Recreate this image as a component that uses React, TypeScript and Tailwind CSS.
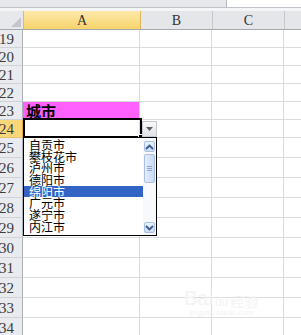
import React from "react";

const rows = [19, 20, 21, 22, 23, 24, 25, 26, 27, 28, 29, 30, 31, 32, 33, 34];
const cities = ["自贡市", "攀枝花市", "泸州市", "德阳市", "绵阳市", "广元市", "遂宁市", "内江市"];

const Row = ({ n }: { n: number }) => {
  const tall = n >= 25;
  const active = n === 24;
  return (
    <div className={`flex shrink-0 ${tall ? "h-[20px]" : "h-[18px]"}`}>
      <div
        className={`w-[24px] shrink-0 flex items-center -ml-[1px] border-r border-b ${
          active ? "bg-[#f9d77a] border-r-[#e0a84a] border-b-[#e8c06a]" : "bg-[#e9ebef] border-r-[#a9b0b9] border-b-[#cfd3d9]"
        }`}
      >
        <span className="text-[15px] leading-none text-[#3b3b3b] pt-[2px]" style={{ fontFamily: '"Liberation Serif", serif' }}>
          {n}
        </span>
      </div>
      <div
        className={`w-[117px] shrink-0 border-r border-b border-[#dadcdd] flex items-end ${n === 23 ? "bg-[#ff61ff]" : "bg-white"}`}
      >
        {n === 23 && (
          <span
            className="pl-[3px] text-[15px] leading-[17px] font-bold text-black"
            style={{ fontFamily: '"Noto Sans CJK SC", sans-serif' }}
          >
            城市
          </span>
        )}
      </div>
      <div className="w-[72px] shrink-0 border-r border-b border-[#dadcdd] bg-white" />
      <div className="w-[72px] shrink-0 border-r border-b border-[#dadcdd] bg-white" />
      <div className="flex-1 border-b border-[#dadcdd] bg-white" />
    </div>
  );
};

const Chevron = ({ up }: { up?: boolean }) => (
  <svg width="9" height="6" viewBox="0 0 9 6">
    <path
      d={up ? "M1 5 L4.5 1.5 L8 5" : "M1 1 L4.5 4.5 L8 1"}
      fill="none"
      stroke="#3c5a8c"
      strokeWidth="1.8"
    />
  </svg>
);

export default function App() {
  return (
    <div className="relative w-[301px] h-[335px] overflow-hidden bg-white flex flex-col">
      {/* formula bar strip */}
      <div className="flex h-[7px] shrink-0">
        <div className="w-[226px] bg-[#e6e8ec]" />
        <div className="flex-1 bg-white border-l border-[#b4b9c0]" />
      </div>
      <div className="h-px shrink-0 bg-[#bfc4ca]" />
      <div className="h-[3px] shrink-0 bg-[#f4f5f7]" />

      {/* column headers */}
      <div className="flex h-[19px] shrink-0 border-b border-[#a3a9b1]" style={{ fontFamily: '"Liberation Serif", serif' }}>
        <div className="relative w-[24px] shrink-0 bg-[#e6e8ec] border-r border-[#b7bcc3]">
          <svg className="absolute right-[2px] bottom-[2px]" width="10" height="10" viewBox="0 0 10 10">
            <polygon points="10,0 10,10 0,10" fill="#c3c7cd" />
          </svg>
        </div>
        <div className="w-[117px] shrink-0 flex items-center justify-center bg-linear-to-b from-[#fde9a9] to-[#f7d36a] border-r border-[#e2b55a] text-[14px] text-[#333]">
          A
        </div>
        <div className="w-[72px] shrink-0 flex items-center justify-center bg-[#e4e6ea] border-r border-[#c3c8ce] text-[14px] text-[#333]">
          B
        </div>
        <div className="w-[72px] shrink-0 flex items-center justify-center bg-[#e4e6ea] border-r border-[#c3c8ce] text-[14px] text-[#333]">
          C
        </div>
        <div className="flex-1 bg-[#e4e6ea]" />
      </div>

      {rows.map((n) => (
        <Row key={n} n={n} />
      ))}

      {/* active cell */}
      <div className="absolute left-[23px] top-[118px] w-[119px] h-[20px] border-2 border-black" />
      <div className="absolute left-[138px] top-[134px] w-[5px] h-[5px] bg-black border border-white" />

      {/* dropdown button */}
      <div className="absolute left-[142px] top-[121px] w-[15px] h-[16px] border border-[#c4c8ce] bg-linear-to-b from-[#f7f8f9] to-[#dfe2e6] flex items-center justify-center">
        <svg width="7" height="4" viewBox="0 0 7 4">
          <polygon points="0,0 7,0 3.5,4" fill="#5a5f66" />
        </svg>
      </div>

      {/* list */}
      <div
        className="absolute left-[23px] top-[137px] w-[134px] h-[99px] border border-black bg-white flex"
        style={{ fontFamily: '"Noto Sans CJK SC", sans-serif' }}
      >
        <div className="flex-1 flex flex-col pt-px">
          {cities.map((c) => (
            <div
              key={c}
              className={`h-[11.7px] shrink-0 pl-[5px] text-[12px] leading-[11.7px] ${
                c === "绵阳市" ? "bg-[#3164c4] text-white" : "text-black"
              }`}
            >
              {c}
            </div>
          ))}
        </div>
        <div className="w-[13px] shrink-0 flex flex-col items-center pt-[3px] pb-[2px] bg-[#f7f9fc]">
          <div className="w-[11px] h-[11px] rounded-[2px] border border-[#a9c0e2] bg-linear-to-b from-[#eaf2fd] to-[#c9dcf5] flex items-center justify-center">
            <Chevron up />
          </div>
          <div className="mt-[2px] w-[11px] h-[29px] rounded-[2px] border border-[#a9c0e2] bg-linear-to-r from-[#e3edfb] to-[#c8dbf4] flex flex-col items-center justify-center gap-[1px]">
            <div className="w-[5px] h-px bg-[#8ca6cc]" />
            <div className="w-[5px] h-px bg-[#8ca6cc]" />
            <div className="w-[5px] h-px bg-[#8ca6cc]" />
          </div>
          <div className="flex-1" />
          <div className="w-[11px] h-[11px] rounded-[2px] border border-[#a9c0e2] bg-linear-to-b from-[#eaf2fd] to-[#c9dcf5] flex items-center justify-center">
            <Chevron />
          </div>
        </div>
      </div>

      {/* faint watermark */}
      <div className="absolute left-[184px] top-[288px] flex flex-col items-center text-[#f3f3f3] pointer-events-none" style={{ fontFamily: '"Liberation Sans", sans-serif' }}>
        <div className="flex items-end gap-[2px]">
          <span className="text-[20px] leading-none">Bai</span>
          <span className="text-[12px] leading-none">du</span>
          <span className="text-[14px] leading-none" style={{ fontFamily: '"Noto Sans CJK SC", sans-serif' }}>经验</span>
        </div>
        <span className="text-[8px] leading-[10px]">jingyan.baidu.com</span>
      </div>
    </div>
  );
}
